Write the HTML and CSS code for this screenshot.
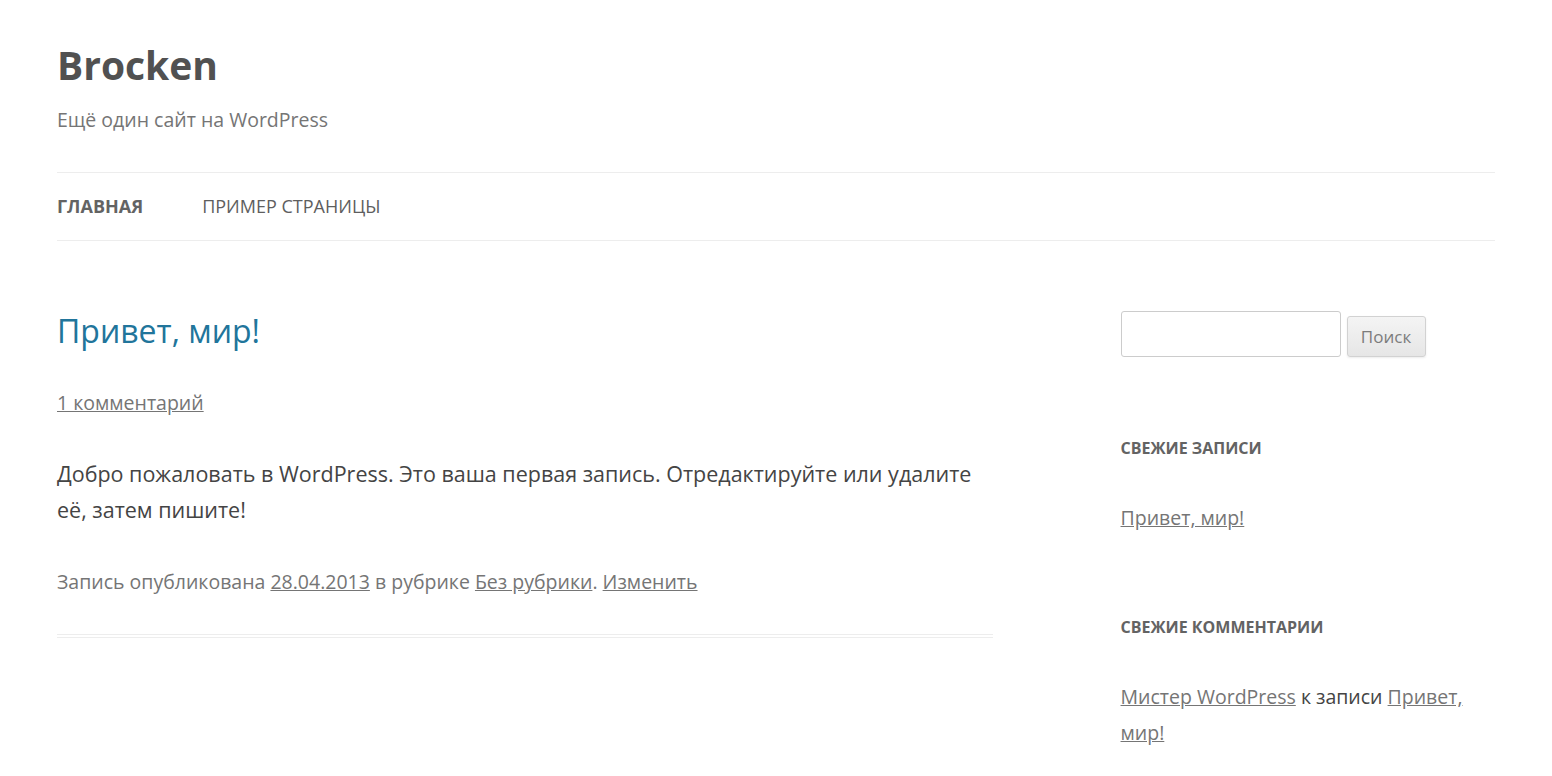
FILE: index.html
```html
<!DOCTYPE html>
<html lang="ru">
<head>
<meta charset="utf-8">
<title>Brocken</title>
<link rel="stylesheet" href="styles.css">
</head>
<body>
<div class="site">
  <header class="site-header">
    <h1 class="site-title"><a href="#">Brocken</a></h1>
    <p class="site-description">Ещё один сайт на WordPress</p>
    <nav class="main-nav">
      <ul class="nav-menu">
        <li class="current"><a href="#">Главная</a></li>
        <li><a href="#">Пример страницы</a></li>
      </ul>
    </nav>
  </header>
  <div class="main">
    <div class="content">
      <article class="post">
        <h2 class="entry-title"><a href="#">Привет, мир!</a></h2>
        <div class="comments-link"><a href="#">1 комментарий</a></div>
        <div class="entry-content">
          <p>Добро пожаловать в WordPress. Это ваша первая запись. Отредактируйте или удалите её, затем пишите!</p>
        </div>
        <footer class="entry-meta">Запись опубликована <a href="#">28.04.2013</a> в рубрике <a href="#">Без рубрики</a>. <a href="#">Изменить</a></footer>
      </article>
    </div>
    <aside class="sidebar">
      <form class="search-form">
        <input class="search-input" type="text">
        <button class="search-button" type="button">Поиск</button>
      </form>
      <section class="widget">
        <h3 class="widget-title">Свежие записи</h3>
        <ul class="widget-list">
          <li><a href="#">Привет, мир!</a></li>
        </ul>
      </section>
      <section class="widget">
        <h3 class="widget-title">Свежие комментарии</h3>
        <ul class="widget-list">
          <li><a href="#">Мистер WordPress</a> к записи <a href="#">Привет, мир!</a></li>
        </ul>
      </section>
    </aside>
  </div>
</div>
</body>
</html>
```
FILE: styles.css
```css
html, body {
  margin: 0;
  padding: 0;
  background: #fff;
}
body {
  font-family: "Open Sans", "Liberation Sans", sans-serif;
  color: #444;
}
.site {
  padding: 0 57px;
}
.site-header {
  padding-top: 37px;
}
.site-title {
  margin: 0;
  font-size: 39px;
  line-height: 55px;
  font-weight: 700;
}
.site-title a {
  color: #515151;
  text-decoration: none;
}
.site-description {
  margin: 14px 0 0;
  font-size: 19.5px;
  line-height: 27px;
  font-weight: 400;
  color: #757575;
}
.main-nav {
  margin-top: 39px;
  border-top: 1px solid #ededed;
  border-bottom: 1px solid #ededed;
}
.nav-menu {
  list-style: none;
  margin: 0;
  padding: 0;
  display: flex;
  gap: 59px;
}
.nav-menu a {
  display: block;
  line-height: 67px;
  font-size: 18px;
  text-transform: uppercase;
  color: #5e5e5e;
  text-decoration: none;
}
.nav-menu .current a {
  font-weight: 700;
  color: #636363;
}
.main {
  display: flex;
  justify-content: space-between;
  align-items: flex-start;
  padding-top: 70px;
}
.content {
  width: 65.104%;
}
.sidebar {
  width: 26.041%;
}
.post {
  border-bottom: 4px double #ededed;
  padding-bottom: 34px;
}
.entry-title {
  margin: 0;
  font-size: 32px;
  line-height: 39px;
  font-weight: 400;
}
.entry-title a {
  color: #21759b;
  text-decoration: none;
}
.comments-link {
  margin-top: 35px;
  font-size: 19.5px;
  line-height: 36px;
}
.comments-link a,
.entry-meta a,
.widget-list a {
  color: #757575;
  text-decoration: underline;
}
.entry-content {
  margin-top: 35px;
  font-size: 21.5px;
  line-height: 36px;
}
.entry-content p {
  margin: 0;
}
.entry-meta {
  margin-top: 36px;
  font-size: 19.5px;
  line-height: 36px;
  color: #757575;
}
.search-form {
  display: flex;
  align-items: flex-end;
  gap: 6px;
  margin: 0;
}
.search-input {
  width: 220px;
  height: 46px;
  box-sizing: border-box;
  border: 1px solid #ccc;
  border-radius: 3px;
  background: #fff;
  padding: 6px;
  margin: 0;
}
.search-button {
  height: 41px;
  width: 79px;
  box-sizing: border-box;
  border: 1px solid #d2d2d2;
  border-radius: 3px;
  background: linear-gradient(to bottom, #f4f4f4, #e6e6e6);
  box-shadow: 0 1px 2px rgba(64, 64, 64, 0.1);
  font-family: "Open Sans", "Liberation Sans", sans-serif;
  font-size: 17px;
  color: #7c7c7c;
  padding: 0;
  margin: 0;
}
.widget {
  margin-top: 73px;
}
.widget-title {
  margin: 0;
  font-size: 16px;
  line-height: 36px;
  font-weight: 700;
  text-transform: uppercase;
  color: #636363;
}
.widget-list {
  list-style: none;
  margin: 34px 0 0;
  padding: 0;
  font-size: 19.5px;
  line-height: 36px;
}
```
